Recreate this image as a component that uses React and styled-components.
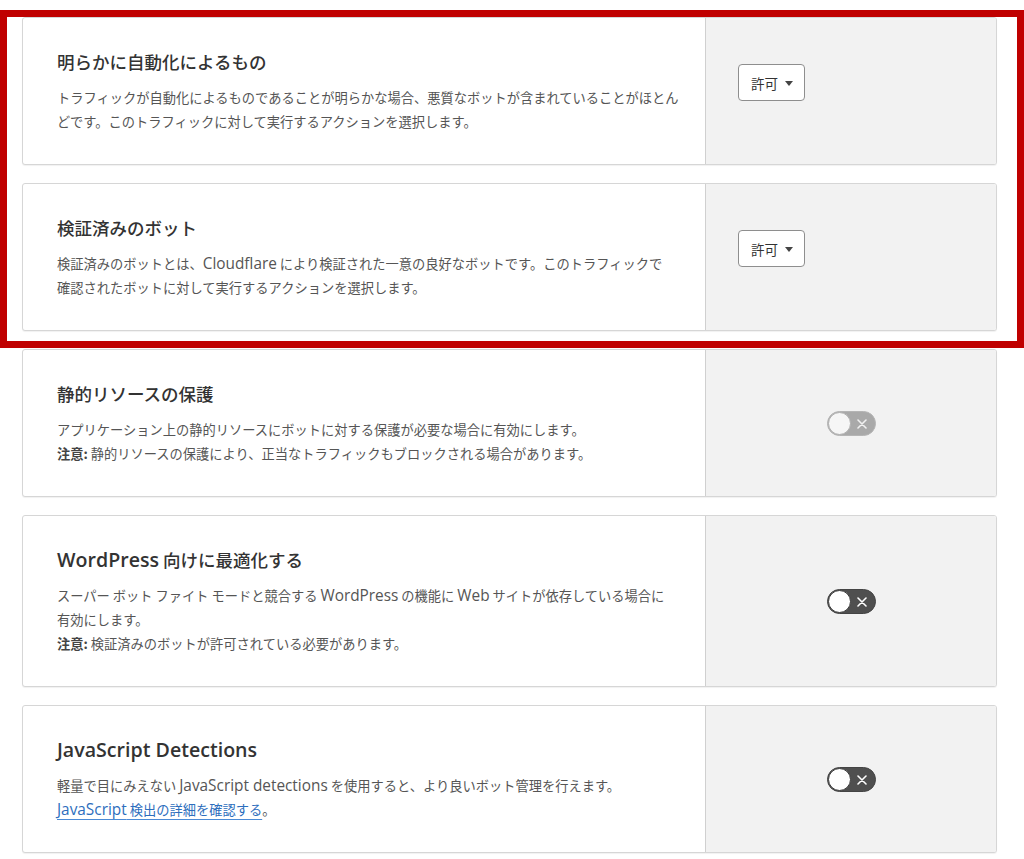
import React from "react";
import styled, { createGlobalStyle } from "styled-components";

const Global = createGlobalStyle`
  html, body { margin: 0; padding: 0; background: #ffffff; }
  body {
    font-family: "Noto Sans CJK JP", "Open Sans", sans-serif;
    color: #333333;
  }
`;

const Page = styled.div`
  position: relative;
  display: flex;
  flex-direction: column;
  gap: 18px;
  padding: 17px 27px 20px 22px;
`;

const Card = styled.section`
  display: grid;
  grid-template-columns: minmax(0, 1fr) 291px;
  border: 1px solid #d6d6d6;
  border-radius: 3px;
  box-shadow: 0 1px 1px rgba(0, 0, 0, 0.06);
  background: #ffffff;
  overflow: hidden;
`;

const Info = styled.div`
  padding: 32px 16px 30px 34px;
`;

const Title = styled.h3`
  margin: 0 0 12px;
  font-size: 17.5px;
  line-height: 24px;
  font-weight: 500;
  color: #333333;
`;

const Desc = styled.p`
  margin: 0;
  font-size: 13.25px;
  line-height: 24px;
  color: #555555;
  white-space: nowrap;
`;

/* Western words embedded in Japanese copy render larger, as in the source UI font */
const Latin = styled.span`
  font-family: "Open Sans", sans-serif;
  font-size: ${(p) => (p.$title ? "1.12em" : "1.16em")};
  font-weight: ${(p) => (p.$title ? 600 : 400)};
  line-height: 1;
`;

const Note = styled.strong`
  font-weight: 700;
  color: #444444;
`;

const Link = styled.a`
  color: #2d6ebd;
  text-decoration: underline;
  text-decoration-color: #4a8ad6;
  text-underline-offset: 4px;
  cursor: pointer;
`;

const Panel = styled.div`
  background: #f2f2f2;
  border-left: 1px solid #d0d0d0;
  display: flex;
  justify-content: ${(p) => (p.$align === "top" ? "flex-start" : "center")};
  align-items: ${(p) => (p.$align === "top" ? "flex-start" : "center")};
  padding: ${(p) => (p.$align === "top" ? "46px 32px" : "0")};
`;

const SelectButton = styled.button`
  display: inline-flex;
  align-items: center;
  gap: 7px;
  height: 37px;
  padding: 0 11px 0 12px;
  background: #ffffff;
  border: 1px solid #8e8e8e;
  border-radius: 4px;
  font-family: "Noto Sans CJK JP", sans-serif;
  font-size: 13.5px;
  color: #333333;
  cursor: pointer;
`;

const Caret = styled.span`
  width: 0;
  height: 0;
  border-left: 4px solid transparent;
  border-right: 4px solid transparent;
  border-top: 5px solid #444444;
  margin-top: 1px;
`;

const Track = styled.span`
  position: relative;
  display: inline-flex;
  align-items: center;
  width: 49px;
  height: 25px;
  box-sizing: border-box;
  border-radius: 13px;
  background: ${(p) => (p.$disabled ? "#a9a9a9" : "#4f4f4f")};
  border: 1px solid ${(p) => (p.$disabled ? "#b5b5b5" : "#444444")};
`;

const Knob = styled.span`
  position: absolute;
  left: 0px;
  top: 0px;
  width: 23px;
  height: 23px;
  box-sizing: border-box;
  border-radius: 50%;
  background: ${(p) => (p.$disabled ? "#f6f6f6" : "#ffffff")};
  border: 1.5px solid ${(p) => (p.$disabled ? "#b0b0b0" : "#3d3d3d")};
`;

const Cross = styled.svg`
  position: absolute;
  left: 29px;
  top: 7px;
`;

const Highlight = styled.div`
  position: absolute;
  left: 0;
  top: 10px;
  width: 1024px;
  height: 338px;
  box-sizing: border-box;
  border: 7px solid #c00000;
  pointer-events: none;
`;

function Select() {
  return (
    <SelectButton type="button">
      許可
      <Caret />
    </SelectButton>
  );
}

function Toggle({ disabled }) {
  return (
    <Track $disabled={disabled} role="switch" aria-checked="false">
      <Knob $disabled={disabled} />
      <Cross width="10" height="10" viewBox="0 0 10 10">
        <path d="M1 1 L9 9 M9 1 L1 9" stroke={disabled ? "#f0f0f0" : "#ffffff"} strokeWidth="1.6" strokeLinecap="round" />
      </Cross>
    </Track>
  );
}

export default function App() {
  return (
    <>
      <Global />
      <Page>
        <Card>
          <Info>
            <Title>明らかに自動化によるもの</Title>
            <Desc>
              トラフィックが自動化によるものであることが明らかな場合、悪質なボットが含まれていることがほとん
              <br />
              どです。このトラフィックに対して実行するアクションを選択します。
            </Desc>
          </Info>
          <Panel $align="top">
            <Select />
          </Panel>
        </Card>

        <Card>
          <Info>
            <Title>検証済みのボット</Title>
            <Desc>
              検証済みのボットとは、<Latin>Cloudflare</Latin> により検証された一意の良好なボットです。このトラフィックで
              <br />
              確認されたボットに対して実行するアクションを選択します。
            </Desc>
          </Info>
          <Panel $align="top">
            <Select />
          </Panel>
        </Card>

        <Card>
          <Info>
            <Title>静的リソースの保護</Title>
            <Desc>
              アプリケーション上の静的リソースにボットに対する保護が必要な場合に有効にします。
              <br />
              <Note>注意:</Note> 静的リソースの保護により、正当なトラフィックもブロックされる場合があります。
            </Desc>
          </Info>
          <Panel>
            <Toggle disabled />
          </Panel>
        </Card>

        <Card>
          <Info>
            <Title>
              <Latin $title>WordPress</Latin> 向けに最適化する
            </Title>
            <Desc>
              スーパー ボット ファイト モードと競合する <Latin>WordPress</Latin> の機能に <Latin>Web</Latin> サイトが依存している場合に
              <br />
              有効にします。
              <br />
              <Note>注意:</Note> 検証済みのボットが許可されている必要があります。
            </Desc>
          </Info>
          <Panel>
            <Toggle />
          </Panel>
        </Card>

        <Card>
          <Info>
            <Title>
              <Latin $title>JavaScript Detections</Latin>
            </Title>
            <Desc>
              軽量で目にみえない <Latin>JavaScript detections</Latin> を使用すると、より良いボット管理を行えます。
              <br />
              <Link>
                <Latin>JavaScript</Latin> 検出の詳細を確認する
              </Link>
              。
            </Desc>
          </Info>
          <Panel>
            <Toggle />
          </Panel>
        </Card>

        <Highlight />
      </Page>
    </>
  );
}
